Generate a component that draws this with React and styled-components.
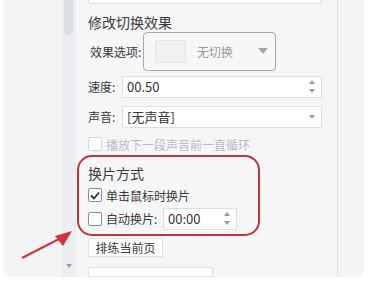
import React from 'react';
import styled, { createGlobalStyle } from 'styled-components';

const GlobalStyle = createGlobalStyle`
  html, body {
    margin: 0;
    background: #fff;
  }
  body {
    font-family: "Noto Sans CJK SC", "Microsoft YaHei", sans-serif;
    color: #3a3a3a;
  }
  * {
    box-sizing: border-box;
  }
`;

const Card = styled.div`
  position: relative;
  margin-left: 3px;
  width: 361px;
  height: 277px;
  background: #f3f4f6;
  border-radius: 0 0 8px 8px;
  overflow: hidden;
  display: flex;
`;

const Gutter = styled.div`
  width: 59px;
`;

const ScrollTrack = styled.div`
  width: 14px;
  background: #eceef1;
  display: flex;
  flex-direction: column;
  justify-content: space-between;
  align-items: center;
  padding-bottom: 9px;
`;

const Thumb = styled.div`
  width: 9px;
  height: 35px;
  margin-left: -2px;
  background: #dadde2;
  border-radius: 0 0 5px 5px;
`;

const Panel = styled.div`
  width: 262px;
  padding: 0 15px 0 12px;
  border-right: 1px solid #e0e2e6;
  background: #f5f6f8;
  display: flex;
  flex-direction: column;
  font-size: 12px;
`;

const TopBox = styled.div`
  height: 10px;
  width: 234px;
  background: #fff;
  border: 1px solid #dfe1e5;
  border-top: none;
  border-radius: 0 0 3px 3px;
`;

const Title = styled.div`
  font-size: 14px;
  line-height: 20px;
  margin-top: ${p => p.$top || 0}px;
  color: #3c3c3c;
`;

const Row = styled.div`
  display: flex;
  align-items: center;
  margin-top: ${p => p.$top || 0}px;
`;

const Label = styled.span`
  width: ${p => p.$w}px;
  padding-left: ${p => p.$pad || 0}px;
  flex: none;
  white-space: nowrap;
`;

const Dropdown = styled.div`
  width: 133px;
  height: 39px;
  border: 1px solid #a9a9a9;
  border-radius: 4px;
  background: #f7f7f8;
  display: flex;
  align-items: center;
  padding: 0 4px 0 11px;
`;

const Swatch = styled.div`
  width: 31px;
  height: 23px;
  background: #f1f1f2;
  border: 1px solid #e4e4e6;
  border-radius: 2px;
`;

const Placeholder = styled.span`
  margin-left: 11px;
  color: #9a9a9a;
  flex: 1;
`;

const Caret = styled.span`
  width: 0;
  height: 0;
  margin-right: 3px;
  border-left: 5px solid transparent;
  border-right: 5px solid transparent;
  border-top: 6px solid #a4a4a8;
`;

const Field = styled.div`
  width: ${p => p.$w}px;
  height: 22px;
  background: #fff;
  border: 1px solid #dcdfe3;
  display: flex;
  align-items: center;
  padding: 0 6px 0 4px;
  font-size: 13px;
  color: #333;
`;

const FieldText = styled.span`
  flex: 1;
`;

const Spinner = styled.div`
  display: flex;
  flex-direction: column;
  gap: 5px;
`;

const Tri = styled.span`
  width: 0;
  height: 0;
  border-left: 3px solid transparent;
  border-right: 3px solid transparent;
  ${p => (p.$up ? 'border-bottom: 4px solid #9a9aa0;' : 'border-top: 4px solid #9a9aa0;')}
`;

const Check = styled.span`
  width: 14px;
  height: 14px;
  flex: none;
  border: 1px solid ${p => (p.$disabled ? '#d6d8dc' : '#8d8f94')};
  border-radius: 2px;
  background: #fff;
  margin-right: 4px;
  display: flex;
  align-items: center;
  justify-content: center;
`;

const CheckText = styled.span`
  color: ${p => (p.$disabled ? '#b9bbc0' : '#3a3a3a')};
  white-space: nowrap;
`;

const Group = styled.div`
  margin-top: 2px;
  margin-left: -11px;
  width: 183px;
  border: 2px solid #c3313c;
  border-radius: 15px;
  padding: 6px 0 4px 9px;
  display: flex;
  flex-direction: column;
`;

const Button = styled.div`
  margin-top: 2px;
  width: 75px;
  height: 21px;
  background: #fff;
  border: 1px solid #e0e2e6;
  display: flex;
  align-items: center;
  justify-content: center;
  color: #3a3a3a;
`;

const BottomBox = styled.div`
  margin-top: 10px;
  width: 125px;
  height: 30px;
  background: #fff;
  border: 1px solid #e0e2e6;
`;

const RightArea = styled.div`
  flex: 1;
  background: #f4f5f7;
`;

const Annotation = styled.svg`
  position: absolute;
  left: 12px;
  top: 225px;
`;

function Checkbox({ checked, disabled }) {
  return (
    <Check $disabled={disabled}>
      {checked && (
        <svg width="10" height="9" viewBox="0 0 10 9">
          <path d="M1 4.5 L4 7.5 L9 1.5" fill="none" stroke="#2e2e2e" strokeWidth="1.8" />
        </svg>
      )}
    </Check>
  );
}

function NumberField({ width, value }) {
  return (
    <Field $w={width}>
      <FieldText>{value}</FieldText>
      <Spinner>
        <Tri $up />
        <Tri />
      </Spinner>
    </Field>
  );
}

export default function App() {
  return (
    <>
      <GlobalStyle />
      <Card>
        <Gutter />
        <ScrollTrack>
          <Thumb />
          <Tri />
        </ScrollTrack>
        <Panel>
          <TopBox />
          <Title $top={8}>修改切换效果</Title>
          <Row>
            <Label $w={55} $pad={2}>效果选项:</Label>
            <Dropdown>
              <Swatch />
              <Placeholder>无切换</Placeholder>
              <Caret />
            </Dropdown>
          </Row>
          <Row $top={5}>
            <Label $w={34}>速度:</Label>
            <NumberField width={200} value="00.50" />
          </Row>
          <Row $top={8}>
            <Label $w={34}>声音:</Label>
            <Field $w={200}>
              <FieldText>[无声音]</FieldText>
              <Tri />
            </Field>
          </Row>
          <Row $top={8}>
            <Checkbox disabled />
            <CheckText $disabled>播放下一段声音前一直循环</CheckText>
          </Row>
          <Group>
            <Title>换片方式</Title>
            <Row $top={4}>
              <Checkbox checked />
              <CheckText>单击鼠标时换片</CheckText>
            </Row>
            <Row $top={4}>
              <Checkbox />
              <Label $w={57}>自动换片:</Label>
              <NumberField width={74} value="00:00" />
            </Row>
          </Group>
          <Button>排练当前页</Button>
          <BottomBox />
        </Panel>
        <RightArea />
        <Annotation width="66" height="40" viewBox="0 0 66 40">
          <line x1="7" y1="33" x2="44" y2="14" stroke="#d0333d" strokeWidth="2" />
          <polygon points="57,6 40,11 48,21" fill="#d0333d" />
        </Annotation>
      </Card>
    </>
  );
}
